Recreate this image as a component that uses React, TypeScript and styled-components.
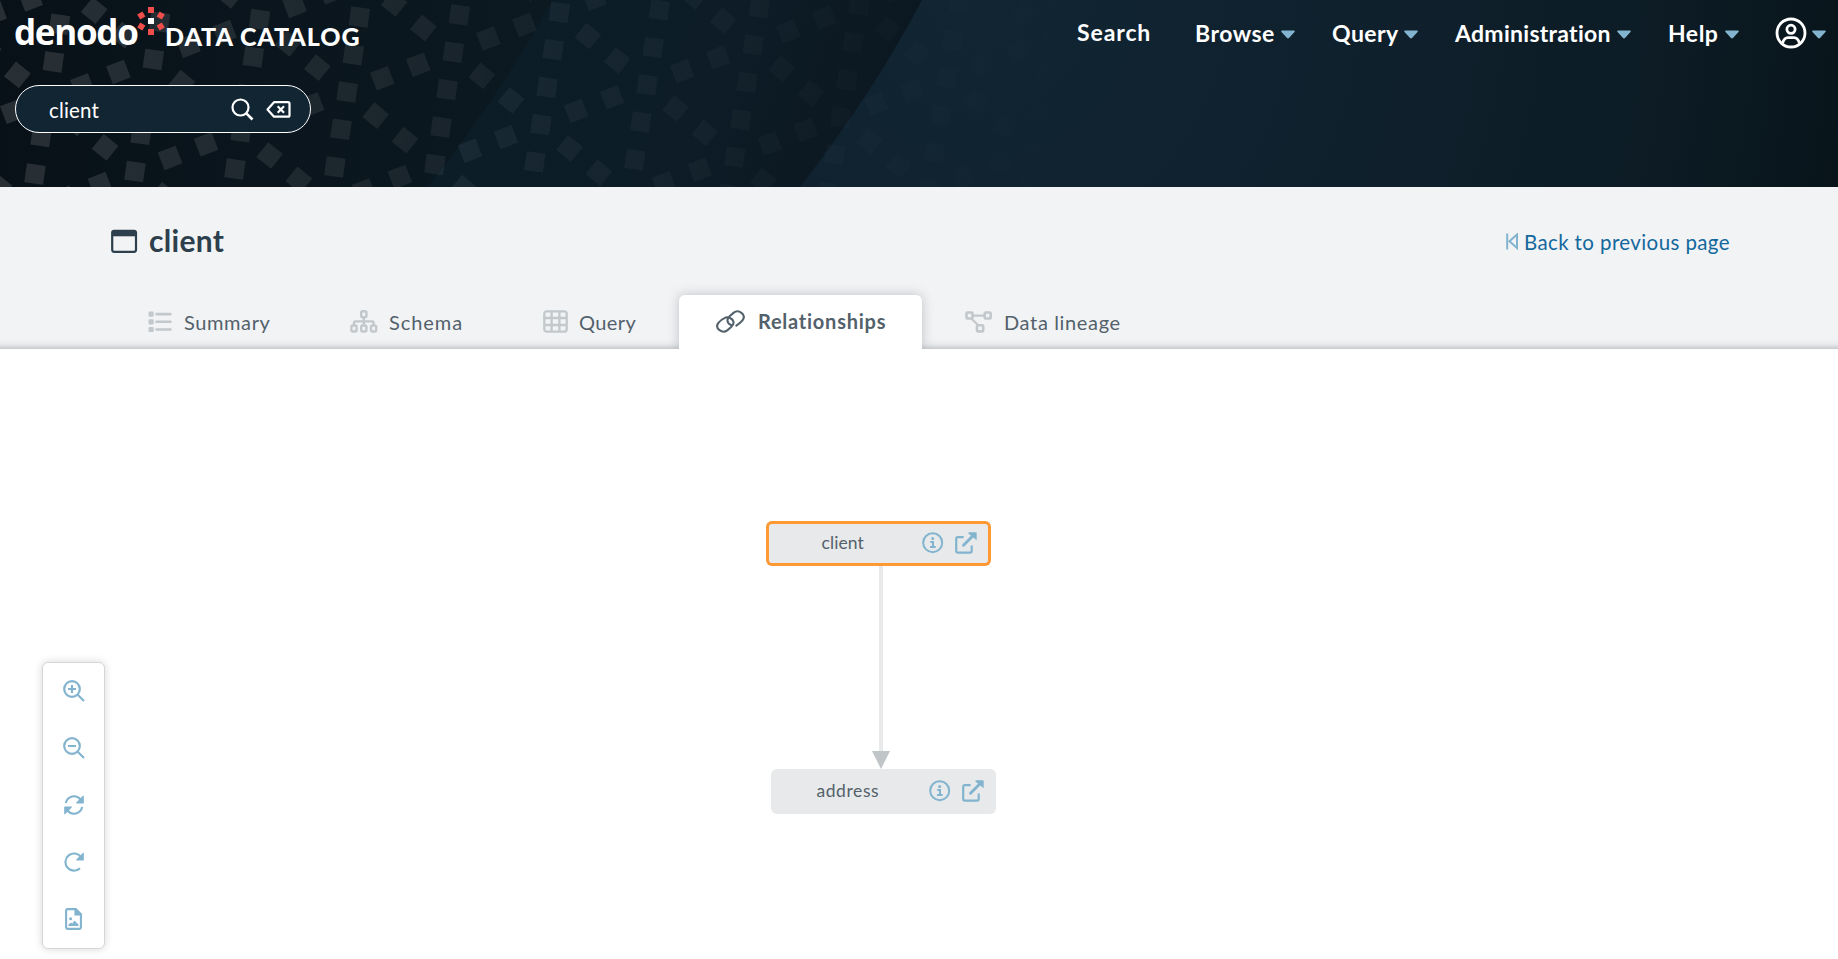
import React from "react";
import styled, { createGlobalStyle } from "styled-components";

const Global = createGlobalStyle`
  * { box-sizing: border-box; }
  body { margin: 0; background: #fff; font-family: Lato, "Open Sans", sans-serif; overflow: hidden; }
`;

const Page = styled.div`
  width: 100%;
  height: 959px;
  display: flex;
  flex-direction: column;
`;

const Header = styled.header`
  position: relative;
  height: 187px;
  flex: none;
  background: #0d1d28;
  overflow: hidden;
`;

const Backdrop = styled.svg`
  position: absolute;
  inset: 0;
`;

const HeaderBody = styled.div`
  position: relative;
  display: flex;
  justify-content: space-between;
  padding: 0 12px 0 15px;
`;

const BrandColumn = styled.div`
  display: flex;
  flex-direction: column;
`;

const Brand = styled.div`
  display: flex;
  height: 85px;
`;

const Wordmark = styled.span`
  font: 700 35px/34px "Open Sans", sans-serif;
  color: #fff;
  margin-top: 15px;
  margin-left: -1px;
  width: 123px;
  letter-spacing: -1.3px;
`;

const LogoMark = styled.svg`
  margin-top: 6px;
  width: 30px;
  height: 30px;
  flex: none;
`;

const ProductName = styled.span`
  font-weight: 900;
  font-size: 25px;
  line-height: 30px;
  margin-top: 21px;
  margin-left: -2px;
  color: #fff;
  white-space: nowrap;
  letter-spacing: 0.95px;
`;

const SearchBox = styled.div`
  display: flex;
  align-items: center;
  width: 296px;
  height: 48px;
  border: 1px solid #fff;
  border-radius: 24px;
  background: #122533;
  padding-left: 33px;
`;

const SearchText = styled.span`
  font-size: 20.5px;
  line-height: 26px;
  color: #fff;
  width: 182px;
  padding-top: 2px;
  letter-spacing: 0.15px;
`;

const ClearIcon = styled.svg`
  margin-left: 12px;
`;

const Nav = styled.nav`
  display: flex;
  align-items: flex-start;
`;

const NavItem = styled.div<{ $w: number; $gap?: number; $ls?: number; $up?: boolean }>`
  display: flex;
  align-items: center;
  width: ${(p) => p.$w}px;
  margin-right: ${(p) => p.$gap ?? 0}px;
  margin-top: ${(p) => (p.$up ? 18 : 19)}px;
  height: 28px;
  justify-content: space-between;
  color: #fff;
  font-weight: 700;
  font-size: 23px;
  white-space: nowrap;
  letter-spacing: ${(p) => p.$ls ?? 0}px;
`;

const CaretSvg = styled.svg`
  width: 14px;
  height: 9px;
  flex: none;
  margin-top: 3px;
`;

const SubHeader = styled.section`
  height: 162px;
  flex: none;
  background: linear-gradient(to bottom, transparent 152px, rgba(90, 96, 104, 0.06) 157px, rgba(90, 96, 104, 0.28) 162px), #f2f3f5;
  display: flex;
  flex-direction: column;
  justify-content: space-between;
`;

const TitleRow = styled.div`
  display: flex;
  align-items: center;
  justify-content: space-between;
  padding: 36px 108px 0 111px;
`;

const Title = styled.h1`
  display: flex;
  align-items: center;
  gap: 10px;
  margin: 0;
  padding-bottom: 1px;
  font-size: 30px;
  line-height: 35px;
  font-weight: 700;
  color: #2d3f4c;
  letter-spacing: 0.3px;
`;

const BackLink = styled.a`
  display: flex;
  align-items: center;
  gap: 6px;
  padding-top: 1px;
  font-size: 20.5px;
  line-height: 26px;
  color: #12689c;
  white-space: nowrap;
  letter-spacing: 0.4px;
`;

const Tabs = styled.div`
  display: flex;
  align-items: flex-end;
  padding-left: 112px;
`;

const Tab = styled.div<{ $w: number; $pad: number; $gap: number; $active?: boolean; $ls?: number }>`
  display: flex;
  align-items: center;
  gap: ${(p) => p.$gap}px;
  width: ${(p) => p.$w}px;
  height: 54px;
  padding-left: ${(p) => p.$pad}px;
  padding-bottom: ${(p) => (p.$active ? 2 : 1)}px;
  font-size: 20px;
  font-weight: ${(p) => (p.$active ? 700 : 400)};
  color: #53616b;
  white-space: nowrap;
  letter-spacing: ${(p) => p.$ls ?? 0}px;
  background: ${(p) => (p.$active ? "#fff" : "transparent")};
  border-radius: 6px 6px 0 0;
  box-shadow: ${(p) => (p.$active ? "0 0 12px rgba(70, 76, 84, 0.3)" : "none")};
  clip-path: inset(-14px -14px 0 -14px);
`;

const Canvas = styled.main`
  position: relative;
  flex: 1;
  background: #fff;
`;

const Edge = styled.svg`
  position: absolute;
  left: 871px;
  top: 217px;
`;

const Node = styled.div<{ $x: number; $y: number; $selected?: boolean; $labelX: number; $iconX: number; $ls?: number }>`
  position: absolute;
  left: ${(p) => p.$x}px;
  top: ${(p) => p.$y}px;
  width: 225px;
  height: 45px;
  border-radius: 6px;
  background: #e7e9ea;
  box-shadow: ${(p) => (p.$selected ? "inset 0 0 0 3px #ff9933" : "none")};
  display: grid;
  grid-template-columns: ${(p) => p.$iconX - p.$labelX}px 33px 22px;
  align-items: center;
  padding-left: ${(p) => p.$labelX}px;
  padding-bottom: 1px;
  color: #53616b;
  font-size: 17.5px;
  line-height: 22px;
  letter-spacing: ${(p) => p.$ls ?? 0.1}px;
`;

const ToolPanel = styled.div`
  position: absolute;
  left: 42px;
  top: 313px;
  width: 63px;
  height: 287px;
  border: 1px solid #d5d6d8;
  border-radius: 6px;
  background: #fff;
  box-shadow: 0 0 8px rgba(0, 0, 0, 0.16);
  display: flex;
  flex-direction: column;
  align-items: center;
`;

const ToolButton = styled.span`
  display: flex;
  align-items: center;
  justify-content: center;
  width: 61px;
  height: 57px;
  padding-bottom: 2px;
`;

const BLUE = "#82b4cf";
const GREY = "#c2c8cb";

const Caret = () => (
  <CaretSvg viewBox="0 0 14 9">
    <path d="M1.2 0.5h11.6c.9 0 1.3 1 .7 1.6L8 8.1c-.6.6-1.4.6-2 0L.5 2.1C-.1 1.5.3.5 1.2.5z" fill={BLUE} />
  </CaretSvg>
);

type Kind = "A" | "D" | "T";
const MOTIF: [Kind, number, number][] = [
  ["A", 353.3, 54.7],
  ["A", 347.2, 92],
  ["A", 341, 129.3],
  ["D", 317.3, 67.7],
  ["T", 312.2, 104.5],
  ["D", 375.7, 115.7],
  ["T", 382.3, 78.3],
];
const ANGLE: Record<Kind, number> = { A: 8, D: 39, T: -21 };

const squares: { x: number; y: number; r: number }[] = [];
for (let i = -8; i <= 10; i++) {
  for (let j = -8; j <= 10; j++) {
    for (const [kind, mx, my] of MOTIF) {
      const x = mx + i * 106.1 - j * 18.4;
      const y = my - i * 39.8 + j * 112.2;
      if (x > -20 && x < 1150 && y > -20 && y < 207) squares.push({ x, y, r: ANGLE[kind] });
    }
  }
}

const HeaderBackdrop = () => (
  <Backdrop width="1838" height="187" viewBox="0 0 1838 187">
    <defs>
      <linearGradient id="left" x1="0" x2="540" y1="0" y2="0" gradientUnits="userSpaceOnUse">
        <stop offset="0" stopColor="#081118" />
        <stop offset="0.5" stopColor="#0a151d" />
        <stop offset="1" stopColor="#0c1921" />
      </linearGradient>
      <linearGradient id="mid" x1="480" x2="860" y1="0" y2="150" gradientUnits="userSpaceOnUse">
        <stop offset="0" stopColor="#0c1d28" />
        <stop offset="0.6" stopColor="#0d1c27" />
        <stop offset="1" stopColor="#0c1821" />
      </linearGradient>
      <radialGradient id="right" cx="980" cy="0" r="880" gradientUnits="userSpaceOnUse">
        <stop offset="0" stopColor="#112533" />
        <stop offset="0.5" stopColor="#0f202c" />
        <stop offset="0.8" stopColor="#0c1b24" />
        <stop offset="1" stopColor="#08141a" />
      </radialGradient>
      <linearGradient id="fade" x1="0" x2="1150" y1="0" y2="120" gradientUnits="userSpaceOnUse">
        <stop offset="0" stopColor="#fff" stopOpacity="0.135" />
        <stop offset="0.25" stopColor="#fff" stopOpacity="0.085" />
        <stop offset="0.45" stopColor="#fff" stopOpacity="0.048" />
        <stop offset="0.75" stopColor="#fff" stopOpacity="0.016" />
        <stop offset="1" stopColor="#fff" stopOpacity="0" />
      </linearGradient>
      <clipPath id="squares">
        {squares.map((s, k) => (
          <rect key={k} x={s.x - 9.5} y={s.y - 9.5} width="19" height="19" transform={`rotate(${s.r} ${s.x} ${s.y})`} />
        ))}
      </clipPath>
    </defs>
    <rect width="1838" height="187" fill="url(#right)" />
    <path d="M0 0H922Q875 90 800 187H0z" fill="url(#mid)" />
    <path d="M0 0H553Q500 95 428 187H0z" fill="url(#left)" />
    <rect width="1150" height="187" fill="url(#fade)" clipPath="url(#squares)" />
  </Backdrop>
);

const Logo = () => (
  <LogoMark viewBox="0 0 30 30">
    <g fill="#f04e4a">
      <rect x="11" y="1" width="6" height="6" />
      <rect x="11" y="23" width="6" height="6" />
      <rect x="1.3" y="6.5" width="6" height="6" transform="rotate(-30 4.3 9.5)" />
      <rect x="1.3" y="17.5" width="6" height="6" transform="rotate(30 4.3 20.5)" />
      <rect x="20.7" y="6.5" width="6" height="6" transform="rotate(30 23.7 9.5)" />
      <rect x="20.7" y="17.5" width="6" height="6" transform="rotate(-30 23.7 20.5)" />
    </g>
    <rect x="11" y="12" width="6" height="6" fill="#fff" />
  </LogoMark>
);

const InfoIcon = () => (
  <svg width="22" height="22" viewBox="0 0 22 22" fill="none" stroke={BLUE}>
    <circle cx="10.7" cy="10.7" r="9.5" strokeWidth="2" />
    <circle cx="10.7" cy="6.4" r="1.5" fill={BLUE} stroke="none" />
    <path d="M8.3 9.9H11V15M8 15H13.7" strokeWidth="2" />
  </svg>
);

const OpenIcon = () => (
  <svg width="22" height="22" viewBox="0 0 22 22" fill="none" stroke={BLUE}>
    <path d="M8.7 5.2H3Q1.2 5.2 1.2 7V19Q1.2 20.7 3 20.7H15Q16.7 20.7 16.7 19V13.5" strokeWidth="2.2" />
    <path d="M8.5 13.3L18 3.8" strokeWidth="2.9" strokeLinecap="round" />
    <path d="M13.7.3H20.7Q21.7.3 21.7 1.2V8.2L13.3 1.5z" fill={BLUE} stroke="none" />
  </svg>
);

export default function App() {
  return (
    <Page>
      <Global />
      <Header>
        <HeaderBackdrop />
        <HeaderBody>
          <BrandColumn>
            <Brand>
              <Wordmark>denodo</Wordmark>
              <Logo />
              <ProductName>DATA CATALOG</ProductName>
            </Brand>
            <SearchBox>
              <SearchText>client</SearchText>
              <svg width="23" height="23" viewBox="0 0 23 23" fill="none" stroke="#fff" strokeWidth="2.2">
                <circle cx="9.5" cy="9.5" r="8" />
                <path d="M15.3 15.3L21.5 21.5" strokeWidth="2.6" />
              </svg>
              <ClearIcon width="25" height="17" viewBox="0 0 25 17" fill="none" stroke="#fff" strokeWidth="2.2">
                <path d="M8 1.2H22Q23.5 1.2 23.5 2.7V14.2Q23.5 15.7 22 15.7H8L1.5 8.5z" strokeLinejoin="round" />
                <path d="M11.7 5.3L18 11.7M18 5.3L11.7 11.7" />
              </ClearIcon>
            </SearchBox>
          </BrandColumn>
          <Nav>
            <NavItem $w={75} $gap={43} $ls={0.9} $up>Search</NavItem>
            <NavItem $w={100} $gap={37} $ls={0.5}>Browse<Caret /></NavItem>
            <NavItem $w={86} $gap={37} $ls={0.45}>Query<Caret /></NavItem>
            <NavItem $w={176} $gap={37} $ls={0.28}>Administration<Caret /></NavItem>
            <NavItem $w={71} $gap={36} $ls={0.5}>Help<Caret /></NavItem>
            <NavItem $w={51}>
              <svg width="32" height="32" viewBox="0 0 32 32" fill="none" stroke="#fff" strokeWidth="2.8">
                <circle cx="16" cy="16" r="14" />
                <circle cx="16" cy="12.3" r="4.1" />
                <path d="M7.5 26Q9.5 20.5 13 20.6H19Q22.5 20.5 24.5 26" />
              </svg>
              <Caret />
            </NavItem>
          </Nav>
        </HeaderBody>
      </Header>
      <SubHeader>
        <TitleRow>
          <Title>
            <svg width="28" height="24" viewBox="0 0 28 24">
              <rect x="1.2" y="1.8" width="23.8" height="21" rx="2" fill="none" stroke="#2d3f4c" strokeWidth="2.2" />
              <path d="M1 1.8H25V7.3H1z" fill="#2d3f4c" />
            </svg>
            client
          </Title>
          <BackLink>
            <svg width="12" height="17" viewBox="0 0 12 17" fill="none" stroke={BLUE} strokeWidth="2">
              <path d="M1.2.5V16.5M11 1.5V15L3.5 8.3z" />
            </svg>
            Back to previous page
          </BackLink>
        </TitleRow>
        <Tabs>
          <Tab $w={201} $pad={36} $gap={12} $ls={0.6}>
            <svg width="24" height="22" viewBox="0 0 24 22" fill={GREY}>
              <rect x="0.5" y="0.5" width="5.2" height="5.2" rx="1.2" />
              <rect x="0.5" y="8.2" width="5.2" height="5.2" rx="1.2" />
              <rect x="0.5" y="15.9" width="5.2" height="5.2" rx="1.2" />
              <path d="M8.5 1.8h14a1 1 0 0 1 0 2.6h-14a1 1 0 0 1 0-2.6zM8.5 9.5h14a1 1 0 0 1 0 2.6h-14a1 1 0 0 1 0-2.6zM8.5 17.2h14a1 1 0 0 1 0 2.6h-14a1 1 0 0 1 0-2.6z" />
            </svg>
            Summary
          </Tab>
          <Tab $w={193} $pad={37} $gap={11} $ls={0.95}>
            <svg width="28" height="23" viewBox="0 0 28 23" fill="none" stroke={GREY} strokeWidth="2.4">
              <rect x="11.2" y="1.2" width="5.2" height="6" rx="1.5" />
              <rect x="1.4" y="15.5" width="5.2" height="6" rx="1.5" />
              <rect x="11.2" y="15.5" width="5.2" height="6" rx="1.5" />
              <rect x="21" y="15.5" width="5.2" height="6" rx="1.5" />
              <path d="M13.8 7V15M4 15V13Q4 11.4 5.5 11.4H22.1Q23.6 11.4 23.6 13V15" />
            </svg>
            Schema
          </Tab>
          <Tab $w={173} $pad={37} $gap={11} $ls={0.4}>
            <svg width="25" height="23" viewBox="0 0 25 23" fill="none" stroke={GREY} strokeWidth="2.3">
              <rect x="1.3" y="1.3" width="22.4" height="20.4" rx="2.5" />
              <path d="M1 8H24M1 15H24M8.6 1V22M16.4 1V22" />
            </svg>
            Query
          </Tab>
          <Tab $w={243} $pad={37} $gap={13} $ls={0.75} $active>
            <svg width="29" height="23" viewBox="0 0 29 23" fill="none" stroke="#53616b" strokeWidth="2.1" strokeLinecap="round">
              <path d="M15.5 15.3C10.8 13.5 10.2 9 13.8 6L17.8 2.6C22.5-1 30.5 4.5 26.8 9.8C25.5 11.6 22.5 14 20.3 15.6" />
              <path d="M13.5 7.7C18.2 9.5 18.8 14 15.2 17L11.2 20.4C6.5 24-1.5 18.5 2.2 13.2C3.5 11.4 6 9 9.5 7.6Q11.3 7 13.5 7.7" />
            </svg>
            Relationships
          </Tab>
          <Tab $w={240} $pad={43} $gap={11} $ls={0.65}>
            <svg width="28" height="22" viewBox="0 0 28 22" fill="none" stroke={GREY} strokeWidth="2.6">
              <rect x="1.5" y="1.5" width="6" height="6" rx="1" />
              <rect x="19.7" y="1.5" width="6" height="6" rx="1" />
              <rect x="12" y="14.2" width="6.2" height="6.2" rx="1" />
              <path d="M7.7 4.6H19.5M6.5 7.7L13 14" strokeWidth="2.2" />
            </svg>
            Data lineage
          </Tab>
        </Tabs>
      </SubHeader>
      <Canvas>
        <Edge width="20" height="204" viewBox="0 0 20 204">
          <path d="M10 0V190" stroke="#e7e9ea" strokeWidth="4" />
          <path d="M1 185H19L10 203z" fill="#c0c5c8" />
        </Edge>
        <Node $x={765.5} $y={172} $labelX={56} $iconX={156} $selected>
          client<InfoIcon /><OpenIcon />
        </Node>
        <Node $x={771.4} $y={420} $labelX={45} $iconX={158} $ls={0.6}>
          address<InfoIcon /><OpenIcon />
        </Node>
        <ToolPanel>
          <ToolButton>
            <svg width="22" height="22" viewBox="0 0 22 22" fill="none" stroke={BLUE} strokeWidth="2.2">
              <circle cx="9" cy="9" r="7.8" /><path d="M14.7 14.7L21 21M9 5V13M5 9H13" />
            </svg>
          </ToolButton>
          <ToolButton>
            <svg width="22" height="22" viewBox="0 0 22 22" fill="none" stroke={BLUE} strokeWidth="2.2">
              <circle cx="9" cy="9" r="7.8" /><path d="M14.7 14.7L21 21M5 9H13" />
            </svg>
          </ToolButton>
          <ToolButton>
            <svg width="22" height="20" viewBox="0 0 22 20" fill="none" stroke={BLUE} strokeWidth="2.1">
              <path d="M2.8 8C4.5 1 13-1 17.5 4.5" /><path d="M19.2 12C17.5 19 9 21 4.5 15.5" />
              <path d="M20.8.8V8Q20.8 8.6 20 8.6H13.5L13 7.8L20 .8z" fill={BLUE} stroke="none" />
              <path d="M1.2 19.2V12Q1.2 11.4 2 11.4H8.500L9 12.200L2 19.200z" fill={BLUE} stroke="none" />
            </svg>
          </ToolButton>
          <ToolButton>
            <svg width="22" height="20" viewBox="0 0 22 20" fill="none" stroke={BLUE} strokeWidth="2.1">
              <path d="M18 5A8.6 8.6 0 1 0 17 16.3" />
              <path d="M20.8.8V8Q20.8 8.6 20 8.6H13.5L13 7.8L20 .8z" fill={BLUE} stroke="none" />
            </svg>
          </ToolButton>
          <ToolButton>
            <svg width="17" height="22" viewBox="0 0 17 22" fill="none" stroke={BLUE} strokeWidth="2.1">
              <path d="M10.5 1.1H2.5Q1.1 1.1 1.1 2.5V19.5Q1.1 20.9 2.5 20.9H14.5Q15.9 20.9 15.9 19.5V6.5z" />
              <path d="M10.5 1V6.5H16z" fill={BLUE} />
              <circle cx="5.6" cy="10.7" r="1.5" fill={BLUE} stroke="none" />
              <path d="M3.5 18V16.5L6 14.5L7.3 15.5L9.5 12.5L13.5 16.5V18z" fill={BLUE} stroke="none" />
            </svg>
          </ToolButton>
        </ToolPanel>
      </Canvas>
    </Page>
  );
}
